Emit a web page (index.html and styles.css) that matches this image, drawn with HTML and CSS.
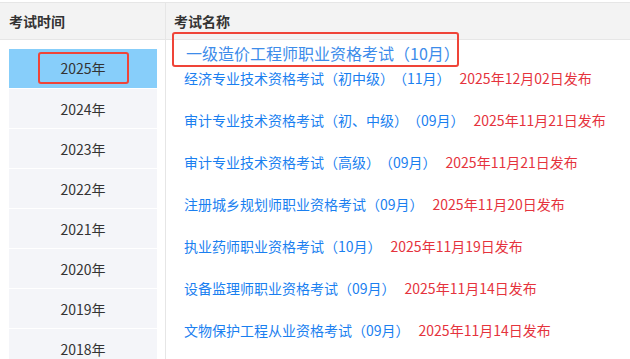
FILE: index.html
```html
<!DOCTYPE html>
<html lang="zh-CN">
<head>
    <meta charset="UTF-8">
    <meta name="viewport" content="width=device-width, initial-scale=1.0">
    <title>考试公告</title>
    <link rel="stylesheet" href="styles.css">
</head>
<body>
    <div class="exam-table">
        <div class="head">
            <div class="head-cell col-year">考试时间</div>
            <div class="head-cell col-name">考试名称</div>
        </div>
        <div class="body">
            <ul class="year-list">
                <li class="year active"><span class="mark">2025年</span></li>
                <li class="year">2024年</li>
                <li class="year">2023年</li>
                <li class="year">2022年</li>
                <li class="year">2021年</li>
                <li class="year">2020年</li>
                <li class="year">2019年</li>
                <li class="year">2018年</li>
            </ul>
            <div class="exam-list">
                <div class="exam-title">一级造价工程师职业资格考试（10月）</div>
                <ul class="exam-rows">
                    <li><a href="#">经济专业技术资格考试（初中级）<span class="month">（11月）</span></a><span class="date">2025年12月02日发布</span></li>
                    <li><a href="#">审计专业技术资格考试（初、中级）<span class="month">（09月）</span></a><span class="date">2025年11月21日发布</span></li>
                    <li><a href="#">审计专业技术资格考试（高级）<span class="month">（09月）</span></a><span class="date">2025年11月21日发布</span></li>
                    <li><a href="#">注册城乡规划师职业资格考试（09月）</a><span class="date">2025年11月20日发布</span></li>
                    <li><a href="#">执业药师职业资格考试（10月）</a><span class="date">2025年11月19日发布</span></li>
                    <li><a href="#">设备监理师职业资格考试（09月）</a><span class="date">2025年11月14日发布</span></li>
                    <li><a href="#">文物保护工程从业资格考试（09月）</a><span class="date">2025年11月14日发布</span></li>
                </ul>
            </div>
        </div>
    </div>
</body>
</html>
```

FILE: styles.css
```css
html, body {
    overflow: hidden;
}

body {
    margin: 0;
    font-family: "Noto Sans CJK SC", "Liberation Sans", sans-serif;
    font-size: 14px;
    color: #333;
}

.exam-table {
    margin-top: 2px;
    border-top: 1px solid #e6e6e6;
}

.head {
    display: grid;
    grid-template-columns: 166px 1fr;
    height: 36px;
    background: #f3f3f3;
    border-bottom: 1px solid #e6e6e6;
}

.head-cell {
    line-height: 36px;
    font-weight: bold;
    color: #333;
}

.col-year {
    padding-left: 9px;
    border-right: 1px solid #e6e6e6;
}

.col-name {
    padding-left: 8px;
}

.body {
    display: grid;
    grid-template-columns: 166px 1fr;
}

.year-list {
    list-style: none;
    margin: 0;
    padding: 9px 8px 0 9px;
    border-right: 1px solid #e6e6e6;
}

.year {
    height: 39px;
    margin-bottom: 1px;
    display: flex;
    align-items: center;
    justify-content: center;
    background: #f4f5f9;
}

.year.active {
    background: #87cefa;
}

.mark {
    box-sizing: border-box;
    width: 91px;
    height: 32px;
    line-height: 28px;
    margin-top: -2px;
    text-align: center;
    border: 2px solid #ef4438;
    border-radius: 3px;
}

.exam-list {
    display: flex;
    flex-direction: column;
}

.exam-title {
    position: relative;
    margin-top: 4px;
    padding-left: 20px;
    line-height: 18px;
    font-size: 16px;
    color: #3d8cea;
}

/* highlight frame drawn over the header edge */
.exam-title::after {
    content: "";
    position: absolute;
    left: 6px;
    top: -12px;
    width: 287px;
    height: 35px;
    box-sizing: border-box;
    border: 2px solid #ef4438;
    border-radius: 3px;
}

.exam-rows {
    list-style: none;
    margin: 6px 0 0;
    padding: 0 0 0 18px;
    display: flex;
    flex-direction: column;
    gap: 22px;
}

.exam-rows li {
    line-height: 20px;
    white-space: nowrap;
}

.exam-rows a {
    color: #1a7ff0;
    text-decoration: none;
}

.month {
    margin-left: 6px;
}

.date {
    margin-left: 9px;
    color: #e5333d;
}
```
